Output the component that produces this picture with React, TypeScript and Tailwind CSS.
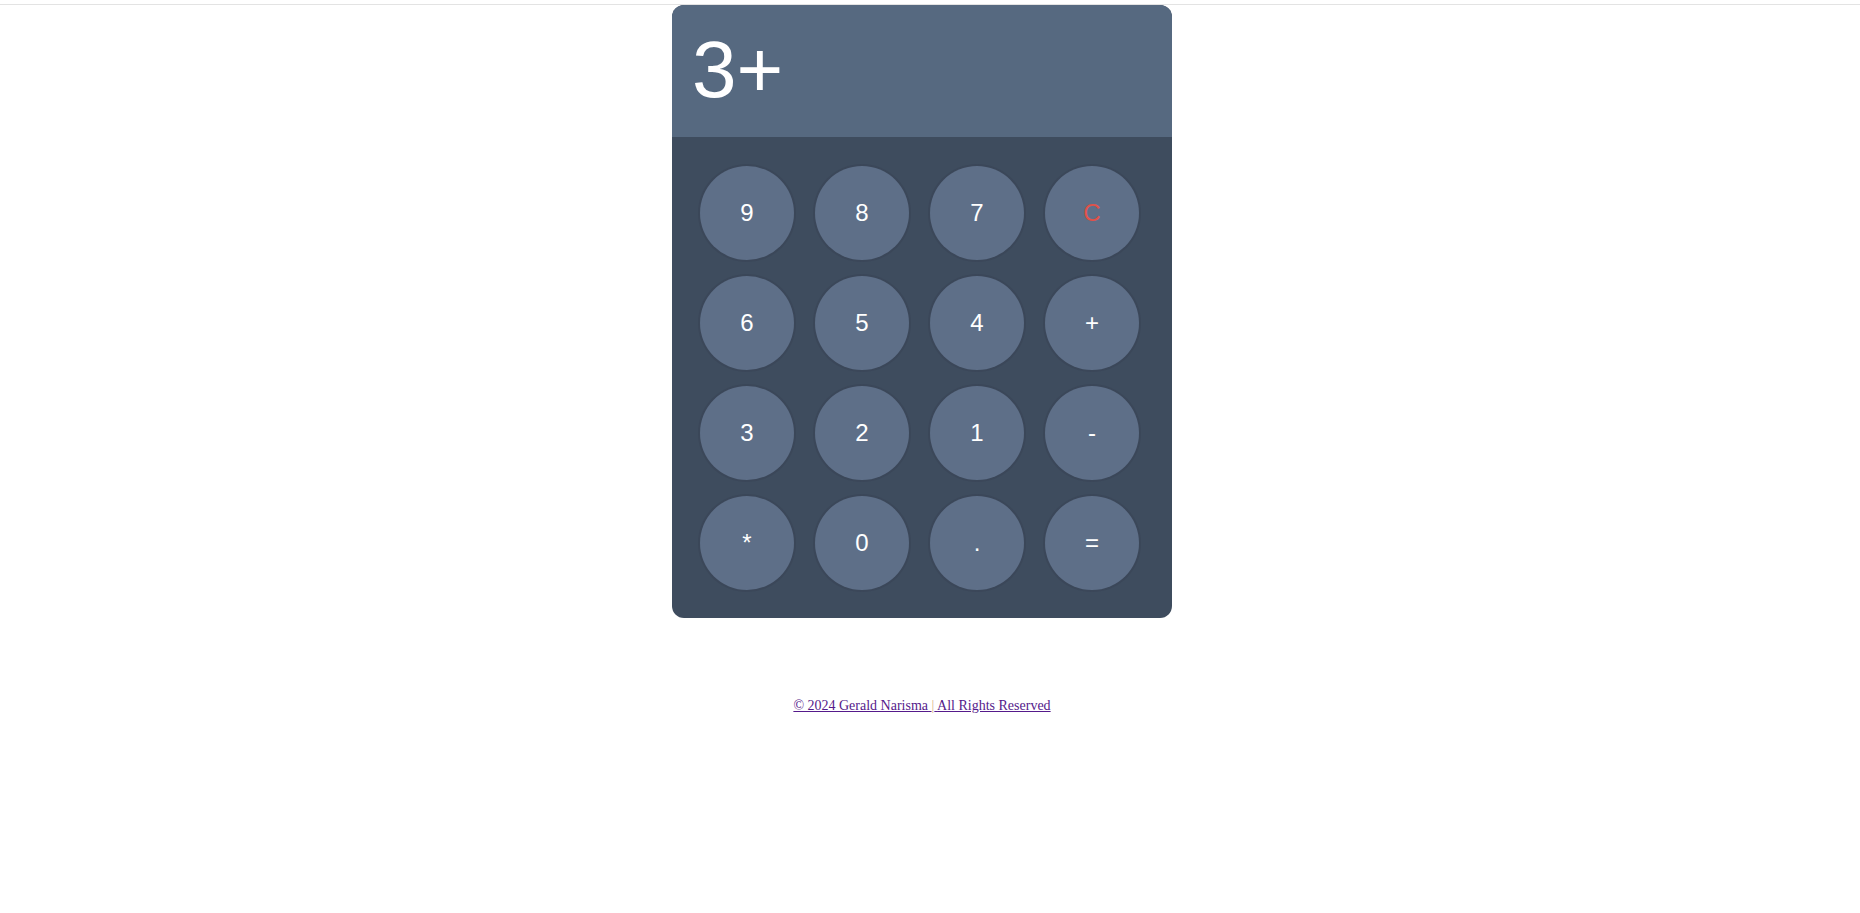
import React from 'react';

const keys = ['9', '8', '7', 'C', '6', '5', '4', '+', '3', '2', '1', '-', '*', '0', '.', '='];

function Key({ label }: { label: string }) {
  return (
    <button
      type="button"
      className={`w-[94px] h-[94px] rounded-full bg-[#5e6f88] shadow-[0_0_0_2px_#3b4759] text-[24px] leading-none flex items-center justify-center ${
        label === 'C' ? 'text-[#e0524a]' : 'text-white'
      }`}
    >
      {label}
    </button>
  );
}

export default function App() {
  return (
    <div className="min-h-[913px] bg-white font-['Liberation_Sans',Arial,sans-serif]">
      <div className="h-[5px] border-b border-[#e3e3e3]" />
      <div className="w-[1844px] flex flex-col items-center">
        <div className="w-[500px] rounded-[12px] overflow-hidden bg-[#3e4c5e]">
          <div className="h-[132px] bg-[#566980] px-[20px] pt-[19px]">
            <div className="text-white text-[80px] leading-[1.15]">3+</div>
          </div>
          <div className="grid grid-cols-[repeat(4,94px)] gap-x-[21px] gap-y-[16px] pl-[28px] pt-[29px] pb-[28px]">
            {keys.map((k) => (
              <Key key={k} label={k} />
            ))}
          </div>
        </div>
        <footer className="mt-[77px] text-center font-['Liberation_Serif','Times_New_Roman',serif] text-[14px]">
          <a href="#" className="text-[#551a8b] underline">
            © 2024 Gerald Narisma{' '}
          </a>
          <span className="text-[#d9b48a]">|</span>
          <a href="#" className="text-[#551a8b] underline">
            {' '}All Rights Reserved
          </a>
        </footer>
      </div>
    </div>
  );
}
